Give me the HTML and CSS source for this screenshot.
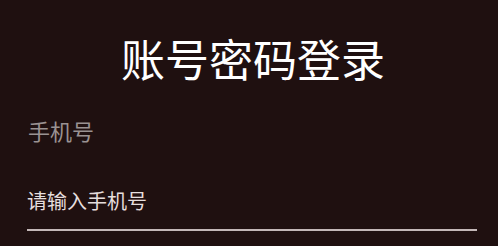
FILE: index.html
```html
<!DOCTYPE html>
<html lang="zh-CN">
<head>
<meta charset="utf-8">
<title>账号密码登录</title>
<link rel="stylesheet" href="styles.css">
</head>
<body>
<main class="login">
  <h1 class="login-title">账号密码登录</h1>
  <form class="login-form">
    <label class="field-label" for="phone">手机号</label>
    <div class="field-input-wrap">
      <input class="field-input" id="phone" type="tel" placeholder="请输入手机号">
    </div>
  </form>
</main>
</body>
</html>
```
FILE: styles.css
```css
html, body {
  margin: 0;
  padding: 0;
  background: #1f1010;
}
body {
  font-family: "Noto Sans CJK SC", "Noto Sans", sans-serif;
  width: 498px;
  height: 246px;
  overflow: hidden;
}
.login {
  display: flex;
  flex-direction: column;
  padding: 32px 21px 0 27px;
}
.login-title {
  margin: 0;
  font-size: 44px;
  font-weight: 400;
  line-height: 53px;
  color: #ffffff;
  text-align: center;
  padding-left: 2px;
}
.login-form {
  display: flex;
  flex-direction: column;
  margin-top: 30px;
}
.field-label {
  font-size: 22px;
  line-height: 30px;
  color: #9a9292;
  padding-left: 1px;
}
.field-input-wrap {
  margin-top: 42px;
  padding-bottom: 14px;
  border-bottom: 2px solid #c4b8b8;
}
.field-input {
  display: block;
  width: 100%;
  box-sizing: border-box;
  border: 0;
  outline: none;
  background: transparent;
  padding: 0;
  font-family: inherit;
  font-size: 20px;
  line-height: 28px;
  height: 28px;
  color: #e6dede;
}
.field-input::placeholder {
  color: #e6dede;
  opacity: 1;
}
```
